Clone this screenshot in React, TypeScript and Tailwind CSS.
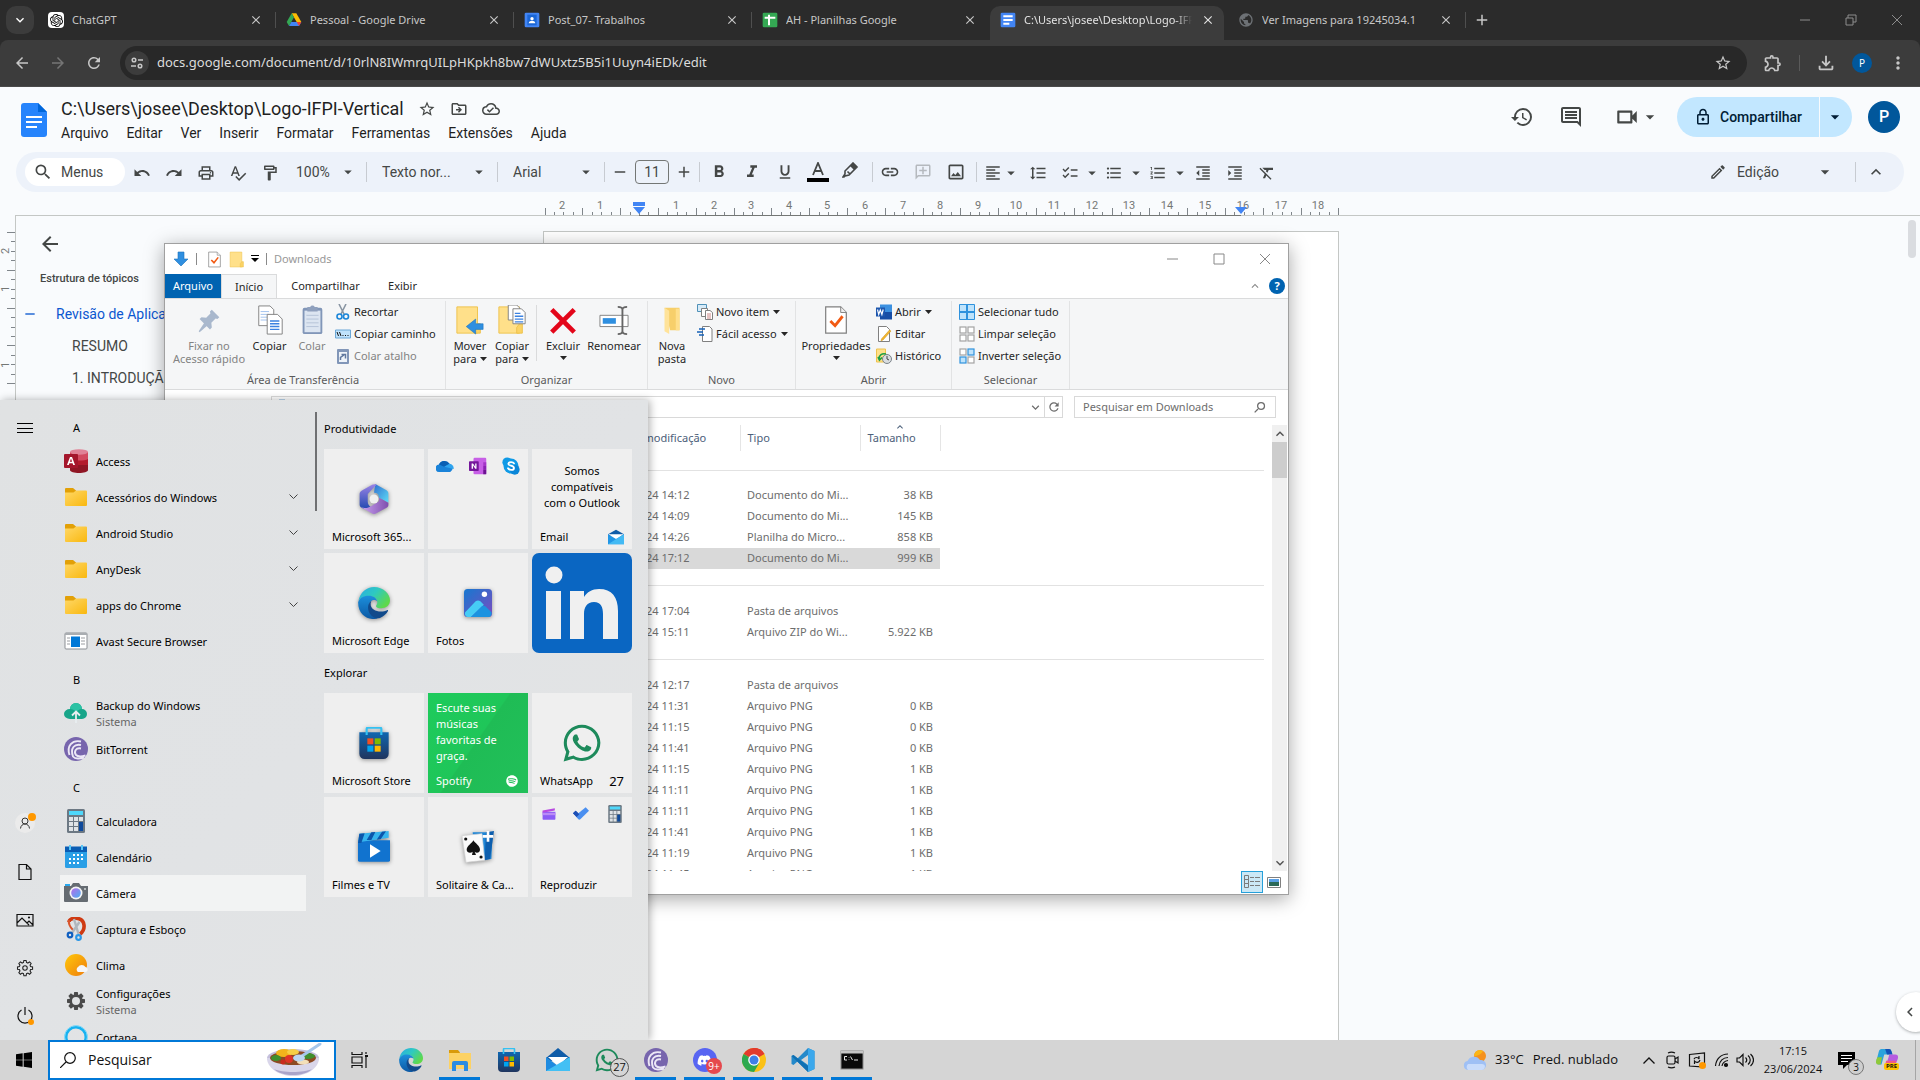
import React from "react";
import {
  MdAdd, MdArrowBack, MdArrowDropDown, MdArrowForward, MdChecklist, MdChevronLeft, MdClose,
  MdFormatAlignLeft, MdFormatBold, MdFormatClear, MdFormatIndentDecrease, MdFormatIndentIncrease,
  MdFormatItalic, MdFormatLineSpacing, MdFormatListBulleted, MdFormatListNumbered, MdFormatUnderlined,
  MdHistory, MdInsertLink, MdKeyboardArrowDown, MdKeyboardArrowUp, MdMoreVert, MdOutlineAddComment,
  MdOutlineCloudDone, MdOutlineDriveFileMove, MdOutlineEdit, MdOutlineExtension, MdOutlineFileDownload,
  MdOutlineFormatPaint, MdOutlineImage, MdOutlineInsertComment, MdOutlineLock, MdOutlinePrint,
  MdOutlineVideocam, MdPublic, MdRedo, MdRefresh, MdRemove, MdSearch, MdSpellcheck, MdStarBorder, MdUndo,
} from "react-icons/md";
import { FaDiscord, FaSpotify, FaWhatsapp } from "react-icons/fa";
import { SiOpenai } from "react-icons/si";

type IconProps = { size?: number; className?: string };
type Drawn = (p: IconProps) => React.ReactElement;

const Svg = ({ size = 24, box = 24, className = "", children }: IconProps & { box?: number; children: React.ReactNode }) => (
  <svg width={size} height={size} viewBox={`0 0 ${box} ${box}`} className={`shrink-0 ${className}`} aria-hidden="true">
    {children}
  </svg>
);

/* ---------- app icons ---------- */

const DriveIcon: Drawn = (p) => (
  <Svg {...p}>
    <path d="M8.500 2h7l7.500 13h-7z" fill="#fbbc04" />
    <path d="M8.500 2 12 8 4.600 21 1 15z" fill="#34a853" />
    <path d="M8 15h15l-3.500 6H4.600z" fill="#4285f4" />
    <path d="M16 15h7l-3.500 6z" fill="#ea4335" />
  </Svg>
);
const ClassroomIcon: Drawn = (p) => (
  <Svg {...p}>
    <rect x="1" y="1" width="22" height="22" rx="2" fill="#4285f4" />
    <rect x="5" y="4" width="14" height="16" fill="#1a66d6" />
    <circle cx="12" cy="10" r="2.500" fill="#fff" />
    <path d="M7 17c0-3 3-4 5-4s5 1 5 4z" fill="#fff" />
  </Svg>
);
const SheetsIcon: Drawn = (p) => (
  <Svg {...p}>
    <rect x="1" y="1" width="22" height="22" rx="2" fill="#34a853" />
    <path d="M4 7h16v3H4zM9 4h3v16H9z" fill="#fff" />
  </Svg>
);
const DocsTabIcon: Drawn = (p) => (
  <Svg {...p}>
    <rect x="1" y="1" width="22" height="22" rx="2" fill="#4285f4" />
    <path d="M5 5h14v3H5zM5 10.500h14v3H5zM5 16h9v3H5z" fill="#fff" />
  </Svg>
);
const GptIcon: Drawn = ({ size = 16 }) => (
  <span className="flex h-4 w-4 items-center justify-center rounded-sm bg-white text-black">
    <SiOpenai size={size - 3} />
  </span>
);
const DocsLogo = () => (
  <svg width="26" height="34" viewBox="0 0 26 34" aria-hidden="true">
    <path d="M3 0h14l9 9v22a3 3 0 0 1-3 3H3a3 3 0 0 1-3-3V3a3 3 0 0 1 3-3z" fill="#2684fc" />
    <path d="M17 0l9 9h-9z" fill="#0066da" />
    <path d="M5 13h16v2H5zM5 18h16v2H5zM5 23h11v2H5z" fill="#fff" />
  </svg>
);
const AccessIcon: Drawn = (p) => (
  <Svg {...p}>
    <path d="M6 3v18c0 4 18 4 18 0V3z" fill="#8f1624" />
    <path d="M6 3v13h18V3z" fill="#b31b2c" />
    <path d="M6 3v7c3 2 15 2 18 0V3z" fill="#d24a5f" />
    <ellipse cx="15" cy="3" rx="9" ry="2.700" fill="#e08296" />
    <rect x="0" y="5" width="14" height="14" rx="1" fill="#a4172c" />
    <path d="M3 16 6 8h2l3 8H9.200l-.6-1.800H5.400L4.800 16zM5.900 12.700h2.200L7 9.600z" fill="#fff" />
  </Svg>
);
const FolderIcon: Drawn = (p) => (
  <Svg {...p}>
    <defs>
      <linearGradient id="folder-front" x1="0" y1="0" x2="1" y2="1">
        <stop offset="0" stopColor="#ffd868" /><stop offset="1" stopColor="#f9b80f" />
      </linearGradient>
    </defs>
    <path d="M1 4a1 1 0 0 1 1-1h7l3 2.500V9H1z" fill="#e2a007" />
    <path d="M1 7.500h8.500L12 5.500h10a1 1 0 0 1 1 1V20a1 1 0 0 1-1 1H2a1 1 0 0 1-1-1z" fill="url(#folder-front)" />
  </Svg>
);
const AvastIcon: Drawn = (p) => (
  <Svg {...p}>
    <rect x="1" y="4" width="22" height="16" rx="1" fill="#fff" stroke="#8b8f94" />
    <path d="M1 4h22v2H1z" fill="#a9adb1" />
    <rect x="7" y="7.500" width="9" height="10.500" fill="#0078d7" />
    <path d="M3 9h3M3 12h3M3 15h3M17 9h4M17 12h4M17 15h4" stroke="#9a9da1" />
  </Svg>
);
const BackupIcon: Drawn = (p) => (
  <Svg {...p}>
    <path d="M6 18a6 5 0 0 1 0-10 6 6 0 0 1 12 0 5 5 0 0 1 0 10z" fill="#17a589" />
    <path d="M12 2a6 6 0 0 1 6 6c-3 0-5 2-6 4C11 9 9 8 6 8a6 6 0 0 1 6-6z" fill="#2bc2a4" />
    <path d="M12 22V11M8 14.500l4-4 4 4" stroke="#e8eef0" strokeWidth="1.800" fill="none" />
  </Svg>
);
const BitTorrentIcon: Drawn = (p) => (
  <Svg {...p}>
    <circle cx="12" cy="12" r="12" fill="#7765ad" />
    <path d="M17 4.500C8 2.500 2.500 9 5.500 18M17 8C10.500 6.500 6 11 9 19.500c2 2.500 7 2.500 11 1M17 11.500c-5-1-7.500 3-5 6.500 2 2 6 1.500 9.500.5" fill="none" stroke="#ece8f6" strokeWidth="1.900" />
  </Svg>
);
const CalcIcon: Drawn = (p) => (
  <Svg {...p}>
    <rect x="3" y="0" width="18" height="24" rx="1.500" fill="#6c7883" />
    <rect x="5" y="2" width="14" height="4" fill="#4fd8fb" />
    <path d="M5 8h4v4H5zM10 8h4v4h-4zM15 8h4v4h-4zM5 13h4v4H5zM10 13h4v4h-4zM5 18h4v4H5zM10 18h4v4h-4z" fill="#dfe3e6" />
    <path d="M15 13h4v9h-4z" fill="#0f4a9c" />
  </Svg>
);
const CalendarIcon: Drawn = (p) => (
  <Svg {...p}>
    <rect x="1" y="2" width="22" height="21" rx="1.500" fill="#2a9fe6" />
    <path d="M1 1.500h22V7H1z" fill="#0a5db4" />
    <path d="M5 0h2v5H5zM17 0h2v5h-2z" fill="#58c7f7" />
    <path d="M9 9h2v2H9zM13 9h2v2h-2zM17 9h2v2h-2zM5 13h2v2H5zM9 13h2v2H9zM13 13h2v2h-2zM17 13h2v2h-2zM5 17h2v2H5zM9 17h2v2H9zM13 17h2v2h-2z" fill="#fff" />
  </Svg>
);
const CameraIcon: Drawn = (p) => (
  <Svg {...p}>
    <defs>
      <linearGradient id="lens" x1="0" y1="0" x2="1" y2="1">
        <stop offset="0" stopColor="#b66be8" /><stop offset="1" stopColor="#4bb1f2" />
      </linearGradient>
    </defs>
    <path d="M1 3h5v3H1z" fill="#2aa8ee" />
    <path d="M0 5h7l2-3h6l2 3h7v15a1 1 0 0 1-1 1H1a1 1 0 0 1-1-1z" fill="#666c72" />
    <circle cx="12" cy="12" r="6.500" fill="#f5f5f5" />
    <circle cx="12" cy="12" r="4.800" fill="url(#lens)" />
    <circle cx="21" cy="8" r="1" fill="#d5d8da" />
  </Svg>
);
const SnipIcon: Drawn = (p) => (
  <Svg {...p}>
    <path d="M5 5C5 0 19-1 20 8c.6 5-2 7.500-4 9" fill="none" stroke="#cf3a12" strokeWidth="3.600" />
    <path d="M5 3c-1 5 2 8 4 10" fill="none" stroke="#d9552c" strokeWidth="2" />
    <path d="M10 2l4.500 15M15.500 5 7.500 16.500" stroke="#b0b6bc" strokeWidth="2.400" />
    <circle cx="6" cy="18" r="2.300" fill="#e3e4e5" stroke="#0f5fc0" strokeWidth="2.200" />
    <circle cx="14.500" cy="20.500" r="2.300" fill="#e3e4e5" stroke="#2a96e6" strokeWidth="2.200" />
  </Svg>
);
const WeatherIcon: Drawn = (p) => (
  <Svg {...p}>
    <defs>
      <linearGradient id="sun" x1="0" y1="0" x2="1" y2="1">
        <stop offset="0" stopColor="#ffc80a" /><stop offset="1" stopColor="#ef7d0d" />
      </linearGradient>
    </defs>
    <circle cx="12" cy="12" r="11" fill="url(#sun)" />
    <path d="M14 19a3 3 0 0 1 0-5 4.500 4.500 0 0 1 7.500 0 2.600 2.600 0 0 1 .5 5z" fill="#f6f6f8" />
  </Svg>
);
const GearPath = "M10.500 3h3l.5 2.600 1.900.8 2.200-1.500 2.100 2.100-1.500 2.200.8 1.900 2.600.5v3l-2.600.5-.8 1.900 1.500 2.200-2.100 2.100-2.200-1.500-1.900.8-.5 2.600h-3l-.5-2.600-1.900-.8-2.200 1.500-2.100-2.100 1.500-2.200-.8-1.900L2 14.600v-3l2.500-.5.8-1.900-1.500-2.200 2.100-2.100 2.200 1.500 1.900-.8z";
const cogTeeth = [0, 45, 90, 135, 180, 225, 270, 315];
const SettingsIcon: Drawn = (p) => (
  <Svg {...p}>
    {cogTeeth.map((a) => <path key={a} d="M10.200 3h3.600l.6 4H9.600z" fill="#4a4a4a" transform={`rotate(${a} 12 12)`} />)}
    <circle cx="12" cy="12" r="5.200" fill="none" stroke="#4a4a4a" strokeWidth="2.400" />
  </Svg>
);
const CortanaIcon: Drawn = (p) => (
  <Svg {...p}>
    <circle cx="12" cy="12" r="10" fill="none" stroke="#18b2f0" strokeWidth="3" />
    <circle cx="12" cy="12" r="11.400" fill="none" stroke="#8bdcf8" strokeWidth="1" />
  </Svg>
);
const EdgeIcon: Drawn = (p) => (
  <Svg {...p}>
    <defs>
      <linearGradient id="edge-top" x1="0" y1="0" x2="1" y2=".6">
        <stop offset="0" stopColor="#2aa9e6" /><stop offset=".5" stopColor="#2ec9c1" /><stop offset="1" stopColor="#5fd94a" />
      </linearGradient>
      <linearGradient id="edge-mid" x1="0" y1="0" x2="0" y2="1">
        <stop offset="0" stopColor="#1c8fdc" /><stop offset="1" stopColor="#0c59a4" />
      </linearGradient>
    </defs>
    <path d="M.3 10.500C1.500 4 6.500 0 12 0c7 0 12 5 12 10 0 4-3 6-6.500 6-2.500 0-4-.8-4-1.600 0-.7 1-1.200 1-3 0-2.500-2.500-4.400-5.500-4.400C5 7 1.500 8.500.3 10.500z" fill="url(#edge-top)" />
    <path d="M.1 11.500C.8 8.500 4 6.500 8 6.500c3.500 0 6 1.800 6.500 4.200-1-1-2.500-1.200-3.700-.8C8 11 7.500 16 10 19.500c1.500 2.500 4 4 5 4C9 25.500 0 22 .1 11.500z" fill="url(#edge-mid)" />
    <path d="M10 10.300c-3.500 2.500-3 8 0 11 2 2 5 2.600 6.500 1.900 3-1.200 5-3.200 6-5.200.2-.5-.2-.8-.7-.6-4 2.200-12.800 1-12.300-5 .1-.9.300-1.500.5-2.100z" fill="#114a8b" />
  </Svg>
);
const M365Icon: Drawn = (p) => (
  <Svg {...p}>
    <defs>
      <linearGradient id="m365a" x1="0" y1="0" x2="1" y2="1">
        <stop offset="0" stopColor="#2f6fd0" /><stop offset="1" stopColor="#5fdcf6" />
      </linearGradient>
      <linearGradient id="m365b" x1="0" y1="0" x2="0" y2="1">
        <stop offset="0" stopColor="#9a83e6" /><stop offset="1" stopColor="#234ab0" />
      </linearGradient>
      <linearGradient id="m365c" x1="0" y1="0" x2="1" y2="0">
        <stop offset="0" stopColor="#c9a0f0" /><stop offset="1" stopColor="#7f4fae" />
      </linearGradient>
    </defs>
    <path d="M13 0 22 5c1 .6 1.500 1.500 1.500 2.600V15l-7.500-4c0-3-2-4-4-4z" fill="url(#m365a)" />
    <path d="M14 .5 7 8v6c0 2 1 3.500 2.500 4.500L4 20l-2.500-1.500C.6 18 .5 17 .5 16V8c0-1 .5-2 1.500-2.600L10.500.6C11.500 0 13 0 14 .5z" fill="url(#m365b)" />
    <path d="M2 18.800C5 19.500 8 19 10 17.500l6-3.700V11l7.500 4v1.600c0 1-.5 1.800-1.500 2.400l-8.500 4.600c-1 .6-2 .6-3 0z" fill="url(#m365c)" />
    <circle cx="12" cy="12" r="3.600" fill="#efefef" />
  </Svg>
);
const OneDriveIcon: Drawn = (p) => (
  <Svg {...p}>
    <path d="M5 20a5 5 0 0 1-1-10 8 8 0 0 1 14-1 6 6 0 0 1 1 11z" fill="#1a83d9" />
    <path d="M4 10a8 8 0 0 1 14-1l-7 4z" fill="#0a5fb4" />
    <path d="M11 13l7-4a6 6 0 0 1 5.500 7z" fill="#2fa4ee" />
  </Svg>
);
const OneNoteIcon: Drawn = (p) => (
  <Svg {...p}>
    <rect x="6" y="1" width="17" height="22" rx="1.500" fill="#c75fe6" />
    <path d="M19 7h4v5h-4z" fill="#a436c8" /><path d="M19 12h4v5h-4z" fill="#8a22b3" /><path d="M19 17h4v6h-4z" fill="#6d1292" />
    <rect x="0" y="5.500" width="13" height="13" rx="1" fill="#75179b" />
    <path d="M3.500 15.500v-7h1.800l3 4.500V8.500H10v7H8.300l-3-4.500v4.500z" fill="#fff" />
  </Svg>
);
const SkypeIcon: Drawn = (p) => (
  <Svg {...p}>
    <circle cx="12" cy="12" r="10" fill="#0f9ae6" /><circle cx="7" cy="7" r="6.500" fill="#0f9ae6" /><circle cx="17" cy="17" r="6.500" fill="#0a86d8" />
    <path d="M16 8.500C15 6.500 9 6 8.500 9c-.4 3 7.500 2 7.500 5.500 0 3.500-6.500 3.500-8 .5" fill="none" stroke="#fff" strokeWidth="2.400" strokeLinecap="round" />
  </Svg>
);
const MailOpenIcon: Drawn = (p) => (
  <Svg {...p}>
    <path d="M0 8 12 1l12 7v3H0z" fill="#0f5ca8" />
    <path d="M0 8h24L12 15z" fill="#fff" />
    <path d="M0 8l12 7 12-7v15H0z" fill="#2196e6" />
    <path d="M0 23 24 8v15z" fill="#4cc3f7" opacity=".8" />
  </Svg>
);
const PhotosIcon: Drawn = (p) => (
  <Svg {...p}>
    <defs>
      <linearGradient id="photo-bg" x1="0" y1="0" x2="1" y2="1">
        <stop offset="0" stopColor="#1678d0" /><stop offset="1" stopColor="#7b4cc0" />
      </linearGradient>
    </defs>
    <rect x="0" y="0" width="24" height="24" rx="3" fill="url(#photo-bg)" />
    <path d="M1 20 10 10.500c1-1 3-1 4 0l3 3L6 24H3a3 3 0 0 1-2-4z" fill="#46cdf5" />
    <path d="M6 24l9-9c1-1 2.500-1 3.500 0l5 5a3 3 0 0 1-2.500 4z" fill="#1c93e0" />
    <circle cx="17.500" cy="4.500" r="2.300" fill="#fff" />
  </Svg>
);
const StoreIcon: Drawn = (p) => (
  <Svg {...p}>
    <defs>
      <linearGradient id="bag" x1="0" y1="0" x2="0" y2="1">
        <stop offset="0" stopColor="#0f66b0" /><stop offset="1" stopColor="#20355e" />
      </linearGradient>
    </defs>
    <path d="M1 4h22v16a4 4 0 0 1-4 4H5a4 4 0 0 1-4-4z" fill="url(#bag)" />
    <path d="M6.500 6V1.500a1 1 0 0 1 1-1h9a1 1 0 0 1 1 1V6" fill="none" stroke="#34c1f2" strokeWidth="1.600" />
    <path d="M7 8.500h4.500V13H7z" fill="#f25022" /><path d="M12.500 8.500H17V13h-4.500z" fill="#7fba00" />
    <path d="M7 14h4.500v4.500H7z" fill="#00a4ef" /><path d="M12.500 14H17v4.500h-4.500z" fill="#ffb900" />
  </Svg>
);
const FilmsIcon: Drawn = (p) => (
  <Svg {...p}>
    <path d="M0 7h24v15a1 1 0 0 1-1 1H1a1 1 0 0 1-1-1z" fill="#1173cf" />
    <path d="M1 2 23 0v5L3 8 0 9z" fill="#36b4ee" />
    <path d="M1 2l4-.4L2.500 9H0zM10 1l3-.2-3 6H6.500zM18 .5l3-.3-4 6-3 .4z" fill="#0c56ab" />
    <path d="M9 10l8 5-8 5z" fill="#fff" />
  </Svg>
);
const SolitaireIcon: Drawn = (p) => (
  <Svg {...p}>
    <path d="M8 1l15 0-1 20-12 1z" fill="#1f86d6" />
    <path d="M18 1l6-1-3 21-4 1z" fill="#0e5fae" />
    <path d="M0 3.500 15 2l2 20-14 1.500z" fill="#fafafa" stroke="#d4d4d4" strokeWidth=".5" />
    <path d="M19.500 0v8M15.500 4h8" stroke="#fff" strokeWidth="2" />
    <path d="M8.500 7c1.500 2.500 5 4 5 7 0 2-2.500 3-4 1.500L10.500 18h-3l.5-2.500c-1.500 1.500-4.500.8-4.500-1.500 0-3 4-4.500 5-7z" fill="#111" />
    <circle cx="2.800" cy="6" r="1.200" fill="#111" /><circle cx="14.300" cy="19.500" r="1.200" fill="#111" />
  </Svg>
);
const ClipIcon: Drawn = (p) => (
  <Svg {...p}>
    <path d="M1 8h22v12a2 2 0 0 1-2 2H3a2 2 0 0 1-2-2z" fill="#8b5cf6" />
    <path d="M1 6 22 2v4L1 10z" fill="#b84ae0" /><path d="M1 10h22v4H1z" fill="#b98bf7" />
  </Svg>
);
const TodoIcon: Drawn = (p) => (
  <Svg {...p}>
    <path d="M0 11l4-4 7 7-4 4z" fill="#1d4fb5" />
    <path d="M3.500 14.500 19 2l5 5-13 13c-1 1-2 1-3 0z" fill="#4a8ff0" />
    <path d="M0 11l4-4 5.500 5.500-4 4z" fill="#1d4fb5" />
  </Svg>
);
const MailIcon: Drawn = (p) => (
  <Svg {...p}>
    <path d="M0 10 12 0l12 10v3H0z" fill="#0f5ca8" />
    <path d="M2 9h20l-10 9z" fill="#fff" />
    <path d="M0 9l12 9L24 9v14H0z" fill="#1f8be0" />
    <path d="M0 23 24 9v14z" fill="#43c0f4" />
  </Svg>
);
const ExplorerIcon: Drawn = (p) => (
  <Svg {...p}>
    <path d="M1 2h9l2 2.500v4H1z" fill="#d99a0a" />
    <path d="M1 5h22v16H1z" fill="#fdd264" />
    <path d="M4 23v-8a2 2 0 0 1 2-2h12a2 2 0 0 1 2 2v8h-4v-6H8v6z" fill="#2b8ce0" />
    <path d="M8 17h8v4H8z" fill="#fdd264" />
  </Svg>
);
const ChromeIcon: Drawn = (p) => (
  <Svg {...p}>
    <circle cx="12" cy="12" r="12" fill="#fbc116" />
    <path d="M12 12 1.600 6A12 12 0 0 1 22.400 6z" fill="#e33b2e" />
    <path d="M12 12 1.600 6A12 12 0 0 0 12 24l5.200-9z" fill="#2da94f" />
    <path d="M12 0a12 12 0 0 1 10.400 6H12z" fill="#e33b2e" />
    <circle cx="12" cy="12" r="5.800" fill="#fff" /><circle cx="12" cy="12" r="4.500" fill="#3f7fe8" />
  </Svg>
);
const CodeIcon: Drawn = (p) => (
  <Svg {...p}>
    <path d="M17 0 6.500 10.500 2.500 7 .5 8v8l2 1 4-3.500L17 24l6.500-3V3zM17 7v10l-7-5z" fill="#2489ca" />
    <path d="M17 0l6.500 3v18L17 24z" fill="#3ba8ec" />
    <path d="M2.500 7 17 18v6L.5 8z" fill="#1070b3" />
  </Svg>
);
const CmdIcon: Drawn = (p) => (
  <Svg {...p}>
    <rect x="1" y="3" width="22" height="18" fill="#0a0a0a" stroke="#8a8a8a" />
    <path d="M1 3h22v2.500H1z" fill="#c5c5c5" />
    <path d="M7 8.500H4.500V12H7M9 9v.5M9 11.500v.5M10.500 8.500l2 3.500M14 12h4" stroke="#e5e5e5" fill="none" />
  </Svg>
);
const WindowsIcon: Drawn = (p) => (
  <Svg {...p}>
    <path d="M0 3.500 10 2v9.500H0zM11.500 1.800 24 0v11.500H11.500zM0 12.500h10V22L0 20.500zM11.500 12.500H24V24l-12.500-1.800z" fill="#000" />
  </Svg>
);
const CloudSunIcon: Drawn = (p) => (
  <Svg {...p}>
    <circle cx="17" cy="8" r="6" fill="#f5911e" /><path d="M17 2a6 6 0 0 0-6 6c3 0 8-2 9-5z" fill="#fbb616" />
    <path d="M5 22a4.500 4.500 0 0 1-.5-8.900A7 7 0 0 1 17 12a5 5 0 0 1 2 10z" fill="#9fc0f5" />
    <path d="M5 22a4.500 4.500 0 0 1 0-6h14c3 0 4 3 1.500 5.500L19 22z" fill="#c9dcfb" />
  </Svg>
);
const CopilotIcon: Drawn = (p) => (
  <Svg {...p}>
    <path d="M6 1h8c2 0 2.500 1.500 3 3l1 3H9L6 18H4c-4 0-4-3-3-6l2-8c.5-2 1.500-3 3-3z" fill="#2aa3dc" />
    <path d="M1.500 10h5L5 18H3c-4 0-3.500-4-1.500-8z" fill="#8fc93a" />
    <path d="M10 1h4c2 0 2.500 1.500 3 3l1 3h-6z" fill="#1453b8" />
    <path d="M15 7h6c3 0 3.500 2.500 2.700 5l-2 5c-.7 2-1.700 2-3 2h-8l3-9c.4-1.500.6-3 1.300-3z" fill="#b65be0" />
    <path d="M11 14h11l-1 3c-.7 2-1.700 2-3 2h-8z" fill="#ef5a8a" />
  </Svg>
);
const Bowl = () => (
  <svg width="56" height="34" viewBox="0 0 56 34" aria-hidden="true">
    <ellipse cx="27" cy="15" rx="26" ry="9" fill="#c4bfdc" />
    <path d="M1 15c0 10 12 18 26 18s26-8 26-18z" fill="#d9d6ea" />
    <path d="M8 26c8 8 30 8 38 0-8 4-30 4-38 0z" fill="#aaa4c9" />
    <ellipse cx="27" cy="15" rx="23" ry="7" fill="#8c4a24" />
    <ellipse cx="18" cy="10" rx="8" ry="4" fill="#f2b41b" /><ellipse cx="27" cy="9" rx="6" ry="3" fill="#f7cf46" />
    <ellipse cx="10" cy="15" rx="5" ry="3" fill="#3f8f2e" /><ellipse cx="42" cy="13" rx="7" ry="3" fill="#3f8f2e" />
    <circle cx="23" cy="16" r="4" fill="#df3327" /><circle cx="17" cy="19" r="2.500" fill="#c92a20" />
    <ellipse cx="37" cy="19" rx="6" ry="2.500" fill="#f3dfb8" />
    <path d="M54 1 36 13" stroke="#a5c6ea" strokeWidth="3" strokeLinecap="round" /><ellipse cx="33" cy="15" rx="6" ry="3.500" fill="#bcd6f1" />
  </svg>
);
const ThinDown = ({ className = "" }: { className?: string }) => (
  <svg width="9" height="6" viewBox="0 0 9 6" className={className} aria-hidden="true"><path d="M.5.5l4 4 4-4" fill="none" stroke="currentColor" /></svg>
);

/* ---------- explorer icons ---------- */

const DownArrow: Drawn = (p) => (
  <Svg {...p} box={16}><path d="M5 1h6v7h4l-7 7-7-7h4z" fill="#2f8fe0" stroke="#1b74be" strokeWidth=".6" /></Svg>
);
const CheckDoc: Drawn = (p) => (
  <Svg {...p} box={32}>
    <path d="M5 2h16l6 6v22H5z" fill="#fff" stroke="#808080" strokeWidth="1.300" /><path d="M21 2v6h6" fill="#eee" stroke="#808080" />
    <path d="M10 17l5 5 8-10" fill="none" stroke="#f25a13" strokeWidth="3" />
  </Svg>
);
const PlainFolder: Drawn = (p) => (
  <Svg {...p} box={32}>
    <path d="M4 2h22v28H4z" fill="#ffe08a" stroke="#eec24c" /><path d="M26 20h3v10h-6v-6z" fill="#fbd365" stroke="#eec24c" />
  </Svg>
);
const MoveFolder: Drawn = (p) => (
  <Svg {...p} box={32}>
    <path d="M2 2h22v28H2z" fill="#ffe08a" stroke="#eec24c" /><path d="M24 20h3v10h-6v-6z" fill="#fbd365" stroke="#eec24c" />
    <path d="M30 20h-8v-5l-10 8 10 8v-5h8z" fill="#2f8fe0" stroke="#1b74be" strokeWidth=".6" />
  </Svg>
);
const CopyFolder: Drawn = (p) => (
  <Svg {...p} box={32}>
    <path d="M2 2h22v28H2z" fill="#ffe08a" stroke="#eec24c" /><path d="M24 20h3v10h-6v-6z" fill="#fbd365" stroke="#eec24c" />
    <path d="M12 0h9l3 3v13H12z" fill="#fff" stroke="#808080" /><path d="M17 4h9l4 4v12H17z" fill="#fff" stroke="#808080" />
    <path d="M19 9h6M19 12h9M19 15h9M19 18h9" stroke="#3c82e0" strokeWidth="1.400" />
  </Svg>
);
const CopyDocs: Drawn = (p) => (
  <Svg {...p} box={32}>
    <path d="M4 1h12l4 4v17H4z" fill="#fff" stroke="#808080" /><path d="M6 7h9M6 10h9M6 13h9M6 16h9" stroke="#9ec0ee" />
    <path d="M13 10h11l5 5v16H13z" fill="#fff" stroke="#808080" /><path d="M16 17h10M16 20h10M16 23h10M16 26h10" stroke="#3c82e0" strokeWidth="1.500" />
  </Svg>
);
const PinIcon: Drawn = (p) => (
  <Svg {...p} box={32}>
    <path d="M19 5l8 8-2 2-2-.5-4.500 4.500.5 5-2 2-11-11 2-2 5 .5L17.500 9 17 7z" fill="#a9b8cd" /><path d="M11 19l3 3-8 7-1-1z" fill="#a9b8cd" />
  </Svg>
);
const Clipboard: Drawn = (p) => (
  <Svg {...p} box={32}>
    <rect x="6" y="3" width="21" height="28" rx="2" fill="#8196b8" /><rect x="8" y="6" width="17" height="23" fill="#dce5f1" />
    <path d="M11 2h3a3 3 0 0 1 5 0h3v5H11z" fill="#8fa0bd" /><path d="M10 11h13M10 15h13M10 19h13M10 23h13" stroke="#b4c2d8" />
  </Svg>
);
const DeleteX: Drawn = (p) => (
  <Svg {...p} box={32}><path d="M4 5l24 24M28 5 4 29" stroke="#e3061a" strokeWidth="5" /></Svg>
);
const RenameIcon: Drawn = (p) => (
  <Svg {...p} box={32}>
    <path d="M1 11h30v12H1z" fill="#fff" stroke="#808080" /><path d="M4 14h14v6H4z" fill="#2f8fe0" />
    <path d="M20 2c3 0 5 1 5 3v23c0 2-2 3-5 3M30 2c-3 0-5 1-5 3v23c0 2 2 3 5 3" fill="none" stroke="#666" strokeWidth="2" />
  </Svg>
);
const NewFolder: Drawn = (p) => (
  <Svg {...p} box={32}>
    <path d="M8 3h16v24H14z" fill="#f7cf6a" /><path d="M8 3l5 3v25l-5-3z" fill="#ffe39a" /><path d="M20 4h4v23h-4z" fill="#ffdf8b" />
  </Svg>
);
const Scissors: Drawn = (p) => (
  <Svg {...p} box={16}>
    <path d="M4 0l5 10M11 0 6 10" stroke="#8a96a3" strokeWidth="1.600" />
    <circle cx="4.500" cy="12.500" r="2.500" fill="none" stroke="#1c86d8" strokeWidth="1.600" /><circle cx="11" cy="12.500" r="2.500" fill="none" stroke="#1c86d8" strokeWidth="1.600" />
  </Svg>
);
const PathIcon: Drawn = (p) => (
  <Svg {...p} box={16}><path d="M.5 4h15v8H.5z" fill="#bfe2fb" stroke="#6ba7d6" /><path d="M2 6l1.500 4M4.500 6 6 10M7.500 9.500h1M10 9.500h1M12.500 9.500h1" stroke="#111" /></Svg>
);
const ShortcutIcon: Drawn = (p) => (
  <Svg {...p} box={16}><rect x="2" y="1" width="12" height="15" rx="1" fill="#8196b8" /><path d="M4 4h8v10H4z" fill="#eef3f9" /><path d="M5.500 12V9.500L9 7M6.500 6.500h4v4" fill="none" stroke="#60789f" strokeWidth="1.500" /></Svg>
);
const NewItemIcon: Drawn = (p) => (
  <Svg {...p} box={16}>
    <path d="M.5.5h9v7h-9z" fill="#d7ebf8" stroke="#4f91b8" /><path d="M4.500 4.500h6v8h-6z" fill="#fff" stroke="#808080" /><path d="M8.500 6.500H13l2.500 2v7h-7z" fill="#fff" stroke="#808080" /><path d="M10 10h4M10 12h4M10 14h4" stroke="#c88" />
  </Svg>
);
const EasyIcon: Drawn = (p) => (
  <Svg {...p} box={16}><path d="M5.500.5h7l2.500 2.500v12.500H5.500z" fill="#fff" stroke="#808080" /><path d="M2 3h6M0 6h6M2 9h5" stroke="#1662b8" strokeWidth="1.500" /></Svg>
);
const WordIcon: Drawn = (p) => (
  <Svg {...p} box={16}>
    <path d="M4 .500h12V8H4z" fill="#3b90e0" /><path d="M4 8h12v7.500H4z" fill="#174ea6" /><rect x="0" y="3.500" width="9" height="9" fill="#1d56ae" />
    <path d="M1.500 5.500l1.200 5 1.600-4.500 1.600 4.500 1.300-5" fill="none" stroke="#fff" strokeWidth="1.200" />
  </Svg>
);
const EditDocIcon: Drawn = (p) => (
  <Svg {...p} box={16}><path d="M2.500.5h8l3 3v12h-11z" fill="#fff" stroke="#808080" /><path d="M15 5 7 14l-2 .8.600-2L13.500 4z" fill="#f5b82e" stroke="#c78a12" strokeWidth=".5" /></Svg>
);
const HistoryIcon: Drawn = (p) => (
  <Svg {...p} box={16}><path d="M.5 1h9v13h-9z" fill="#ffe08a" stroke="#eec24c" /><circle cx="11" cy="11" r="4.500" fill="#d9dde0" stroke="#7b8389" /><path d="M11 8v3l2 1" fill="none" stroke="#444" /><path d="M3 11c0-4 3-6 7-5M2 9l1.500 3L6 9.500" fill="none" stroke="#1da043" strokeWidth="1.700" /></Svg>
);
const squares = (fills: boolean[]) => (
  <>
    {fills.map((f, i) => (
      <rect key={i} x={(i % 2) * 8 + 1} y={Math.floor(i / 2) * 8 + 1} width="6" height="6" fill={f ? "#bfe3fb" : "#fff"} stroke={f ? "#2f92dd" : "#a3a3a3"} strokeWidth="1.200" />
    ))}
  </>
);
const SelAll: Drawn = (p) => <Svg {...p} box={16}><path d="M.5.5h15v15H.5z" fill="#bfe3fb" stroke="#2f92dd" /><path d="M8 0v16M0 8h16" stroke="#2f92dd" strokeWidth="2" /></Svg>;
const SelNone: Drawn = (p) => <Svg {...p} box={16}>{squares([false, false, false, false])}</Svg>;
const SelInv: Drawn = (p) => <Svg {...p} box={16}>{squares([false, true, true, false])}</Svg>;

/* ---------- browser ---------- */

const tabs: { title: string; icon: React.ReactNode; active?: boolean }[] = [
  { title: "ChatGPT", icon: <GptIcon size={16} /> },
  { title: "Pessoal - Google Drive", icon: <DriveIcon size={16} /> },
  { title: "Post_07- Trabalhos", icon: <ClassroomIcon size={16} /> },
  { title: "AH - Planilhas Google", icon: <SheetsIcon size={16} /> },
  { title: "C:\\Users\\josee\\Desktop\\Logo-IFPI-Vertical", icon: <DocsTabIcon size={16} />, active: true },
  { title: "Ver Imagens para 19245034.1", icon: <MdPublic size={16} className="text-[#6d7175]" /> },
];

const TabStrip = () => (
  <div className="flex h-10 items-center bg-[#2b2b2b] pl-[6px] text-[#c7c7c7]">
    <button aria-label="Pesquisar guias" className="mr-1 flex h-7 w-7 items-center justify-center rounded-[10px] bg-[#3c3c3c] text-white">
      <MdKeyboardArrowDown size={16} />
    </button>
    {tabs.map((t, i) => (
      <div key={t.title} className={`flex h-10 w-[238px] items-center ${t.active || tabs[i + 1]?.active ? "" : "relative after:absolute after:right-0 after:h-4 after:w-px after:bg-[#4f4f4f]"}`}>
        <div className={`flex items-center pl-[10px] ${t.active ? "mt-[6px] h-[34px] w-[234px] rounded-t-[10px] bg-[#3c3c3c] pb-[6px] text-[#e3e3e3]" : "h-10 w-full"}`}>
          {t.icon}
          <button className="ml-2 w-[170px] overflow-hidden text-left text-[11px] whitespace-nowrap">
            {t.active ? <span className="block w-[168px] overflow-hidden mask-r-from-90%">{t.title}</span> : t.title}
          </button>
          <button aria-label="Fechar guia" className="ml-[6px] flex h-4 w-4 items-center justify-center"><MdClose size={14} /></button>
        </div>
      </div>
    ))}
    <button aria-label="Nova guia" className="ml-[6px] flex h-5 w-5 items-center justify-center"><MdAdd size={18} /></button>
    <div className="ml-auto flex text-[#8d8d8d]">
      {["M1 6h10", "M1 4h7v7H1zM3 4V1h8v7H8", "M1 1l10 10M11 1 1 11"].map((d, i) => (
        <button key={d} aria-label={["Minimizar", "Restaurar", "Fechar"][i]} className="flex h-10 w-[46px] items-center justify-center">
          <svg width="12" height="12" viewBox="0 0 12 12"><path d={d} fill="none" stroke="currentColor" /></svg>
        </button>
      ))}
    </div>
  </div>
);

const AddressBar = () => (
  <div className="bg-[#2b2b2b]">
    <div className="flex h-[47px] items-center rounded-t-[8px] border-b border-[#4a4a4a] bg-[#3c3c3c] px-1 text-[#c7c7c7]">
      <button aria-label="Voltar" className="flex h-9 w-9 items-center justify-center"><MdArrowBack size={18} /></button>
      <button aria-label="Avançar" className="flex h-9 w-9 items-center justify-center text-[#757575]"><MdArrowForward size={18} /></button>
      <button aria-label="Recarregar" className="flex h-9 w-9 items-center justify-center"><MdRefresh size={18} /></button>
      <div className="ml-2 flex h-[34px] flex-1 items-center rounded-full bg-[#282828] pr-[15px] pl-[5px]">
        <button aria-label="Informações do site" className="flex h-6 w-6 items-center justify-center rounded-full bg-[#3c3c3c]">
          <svg width="14" height="14" viewBox="0 0 14 14" fill="none" stroke="currentColor" strokeWidth="1.500"><circle cx="4" cy="4" r="1.800" /><path d="M8 4h5M1 10h5" /><circle cx="10" cy="10" r="1.800" /></svg>
        </button>
        <input aria-label="Endereço" className="ml-2 min-w-0 flex-1 bg-transparent text-[13px] text-[#dcdcdc] outline-none" defaultValue="docs.google.com/document/d/10rlN8IWmrqUILpHKpkh8bw7dWUxtz5B5i1Uuyn4iEDk/edit" />
        <button aria-label="Favoritar"><MdStarBorder size={18} /></button>
      </div>
      <button aria-label="Extensões" className="ml-2 flex w-9 justify-center"><MdOutlineExtension size={20} /></button>
      <span className="ml-2 h-4 w-px bg-[#5a5a5a]" />
      <button aria-label="Downloads" className="ml-2 flex w-9 justify-center"><MdOutlineFileDownload size={22} /></button>
      <button aria-label="Perfil" className="mx-2 flex h-5 w-5 items-center justify-center rounded-full bg-[#01579b] text-[10px] text-white">P</button>
      <button aria-label="Menu" className="flex w-9 justify-center"><MdMoreVert size={20} /></button>
    </div>
  </div>
);

const DocsHeader = () => (
  <header className="flex h-16 items-start pt-[10px] pr-5 pl-[21px] text-[#444746]">
    <div className="pt-[6px]"><DocsLogo /></div>
    <div className="ml-[14px]">
      <div className="flex h-6 items-center">
        <h1 className="text-[18px] leading-6 text-[#1f1f1f]">C:\Users\josee\Desktop\Logo-IFPI-Vertical</h1>
        <div className="ml-[14px] flex gap-[14px]">
          <button aria-label="Estrela"><MdStarBorder size={18} /></button>
          <button aria-label="Mover"><MdOutlineDriveFileMove size={18} /></button>
          <button aria-label="Status"><MdOutlineCloudDone size={18} /></button>
        </div>
      </div>
      <nav className="mt-[2px] flex gap-[18px] text-sm leading-5 text-[#1f1f1f]">
        {["Arquivo", "Editar", "Ver", "Inserir", "Formatar", "Ferramentas", "Extensões", "Ajuda"].map((m) => <button key={m}>{m}</button>)}
      </nav>
    </div>
    <div className="ml-auto flex h-10 items-center">
      <button aria-label="Histórico" className="mr-[25px]"><MdHistory size={24} /></button>
      <button aria-label="Comentários" className="mr-[31px]"><MdOutlineInsertComment size={24} /></button>
      <button aria-label="Reunião" className="mr-[17px] flex items-center"><MdOutlineVideocam size={26} /><MdArrowDropDown size={20} /></button>
      <button className="flex h-10 w-[142px] items-center rounded-l-full bg-[#c2e7ff] pl-[17px] text-sm font-medium text-[#001d35]">
        <MdOutlineLock size={18} className="mr-2" />Compartilhar
      </button>
      <button aria-label="Opções de compartilhamento" className="ml-px flex h-10 w-8 items-center rounded-r-full bg-[#c2e7ff] pl-[5px] text-[#001d35]"><MdArrowDropDown size={20} /></button>
      <button aria-label="Conta" className="ml-4 flex h-8 w-8 items-center justify-center rounded-full bg-[#01579b] text-base font-medium text-white">P</button>
    </div>
  </header>
);

const Sep = () => <span className="h-5 w-px bg-[#c7cbd1]" />;
const ToolButton = ({ label, width = "w-8", children }: { label: string; width?: string; children: React.ReactNode }) => (
  <button aria-label={label} className={`flex h-7 shrink-0 items-center justify-center ${width}`}>{children}</button>
);
const ToolSelect = ({ label, value, width }: { label: string; value: string; width: string }) => (
  <label className={`relative flex items-center ${width}`}>
    <select aria-label={label} className="w-full appearance-none bg-transparent pl-[10px] text-sm outline-none"><option>{value}</option></select>
    <MdArrowDropDown size={18} className="pointer-events-none absolute right-[9px]" />
  </label>
);

const DocsToolbar = () => (
  <div className="mx-4 mt-[1px] flex h-10 items-center rounded-full bg-[#edf2fa] pl-[9px] text-[#444746]">
    <button className="mr-px flex h-7 w-[100px] items-center gap-2 rounded-full bg-white pl-2 text-sm"><MdSearch size={20} />Menus</button>
    <div className="flex pt-[2px]">
      <ToolButton label="Desfazer"><MdUndo size={18} /></ToolButton>
      <ToolButton label="Refazer"><MdRedo size={18} /></ToolButton>
      <ToolButton label="Imprimir"><MdOutlinePrint size={18} /></ToolButton>
      <ToolButton label="Ortografia"><MdSpellcheck size={18} /></ToolButton>
      <ToolButton label="Pintar formatação"><MdOutlineFormatPaint size={18} /></ToolButton>
    </div>
    <ToolSelect label="Zoom" value="100%" width="w-[80px]" /><Sep />
    <ToolSelect label="Estilo" value="Texto nor..." width="ml-[5px] w-[125px]" /><Sep />
    <ToolSelect label="Fonte" value="Arial" width="ml-[5px] w-[101px]" /><Sep />
    <ToolButton label="Diminuir" width="w-[30px]"><MdRemove size={18} /></ToolButton>
    <input aria-label="Tamanho da fonte" defaultValue="11" className="h-6 w-[34px] rounded border border-[#747775] bg-transparent text-center text-sm outline-none" />
    <ToolButton label="Aumentar" width="w-[30px]"><MdAdd size={18} /></ToolButton><Sep />
    <div className="ml-[2px] flex">
      <ToolButton label="Negrito" width="w-[33px]"><MdFormatBold size={20} /></ToolButton>
      <ToolButton label="Itálico" width="w-[33px]"><MdFormatItalic size={20} /></ToolButton>
      <ToolButton label="Sublinhado" width="w-[33px]"><MdFormatUnderlined size={18} /></ToolButton>
      <ToolButton label="Cor do texto" width="w-[33px]">
        <svg width="22" height="20" viewBox="0 0 22 20"><path d="M6 13 11 1l5 12M7.800 9h6.400" fill="none" stroke="#444746" strokeWidth="1.800" /><path d="M0 16h22v4H0z" fill="#000" /></svg>
      </ToolButton>
      <ToolButton label="Cor de destaque" width="w-[33px]">
        <svg width="18" height="20" viewBox="0 0 18 20"><path d="M3 9 11 1l4 4-8 8-4 1-1 1H1l2-3zM5.500 9.500 8 12" fill="none" stroke="#444746" strokeWidth="1.600" /><path d="M8 4l4 4 3-3-4-4z" fill="#444746" /></svg>
      </ToolButton>
    </div>
    <span className="ml-[5px]" /><Sep />
    <ToolButton label="Link" width="w-[33px]"><MdInsertLink size={20} /></ToolButton>
    <ToolButton label="Comentário" width="w-[33px]"><MdOutlineAddComment size={18} className="-scale-x-100 text-[#b5b9be]" /></ToolButton>
    <ToolButton label="Imagem" width="w-[33px]"><MdOutlineImage size={20} /></ToolButton>
    <span className="ml-1" /><Sep />
    <div className="flex pt-px">
      <ToolButton label="Alinhar" width="ml-[5px] w-[40px]"><MdFormatAlignLeft size={18} /><MdArrowDropDown size={18} /></ToolButton>
      <ToolButton label="Espaçamento"><MdFormatLineSpacing size={18} /></ToolButton>
      <ToolButton label="Checklist" width="ml-[5px] w-[44px] gap-1"><MdChecklist size={18} /><MdArrowDropDown size={18} /></ToolButton>
      <ToolButton label="Marcadores" width="w-[44px] gap-1"><MdFormatListBulleted size={18} /><MdArrowDropDown size={18} /></ToolButton>
      <ToolButton label="Numerada" width="w-[44px] gap-1"><MdFormatListNumbered size={18} /><MdArrowDropDown size={18} /></ToolButton>
      <div className="flex gap-2">
        <ToolButton label="Diminuir recuo" width="w-6"><MdFormatIndentDecrease size={18} /></ToolButton>
        <ToolButton label="Aumentar recuo" width="w-6"><MdFormatIndentIncrease size={18} /></ToolButton>
        <ToolButton label="Limpar formatação" width="w-6"><MdFormatClear size={18} /></ToolButton>
      </div>
    </div>
    <button className="ml-auto flex h-7 w-[126px] items-center text-sm"><MdOutlineEdit size={18} className="mr-[10px]" />Edição<MdArrowDropDown size={20} className="ml-auto" /></button>
    <span className="ml-5" /><Sep />
    <ToolButton label="Ocultar menus" width="ml-1 w-8"><MdKeyboardArrowUp size={20} /></ToolButton>
    <span className="w-3" />
  </div>
);

const CM = 37.8;
const HRuler = () => (
  <svg className="block h-6 w-full shrink-0" aria-hidden="true">
    {Array.from({ length: 85 }, (_, i) => i - 10).map((q) => {
      const x = Math.round(639 + (q * CM) / 4);
      const tall = Math.abs(q % 4) === 2;
      return <path key={q} d={`M${x + 0.5} ${tall ? 16 : 20}V23`} stroke="#80868b" />;
    })}
    {Array.from({ length: 21 }, (_, i) => i - 2).filter((n) => n !== 0).map((n) => (
      <text key={n} x={Math.round(638 + n * CM)} y="17" textAnchor="middle" fontSize="11" fill="#747775">{Math.abs(n)}</text>
    ))}
    <path d="M15 23.500H3000" stroke="#c4c7c5" /><path d="M639 23.500h602" stroke="#747775" />
    <path d="M633 10h12v4h-12zM633 15h12l-6 7zM1235 15h12l-6 7z" fill="#4285f4" />
  </svg>
);
const VRuler = () => (
  <svg className="block h-[184px] w-[15px] shrink-0" aria-hidden="true">
    {Array.from({ length: 17 }, (_, i) => i).map((i) => {
      const y = Math.round(16 + i * 9.45);
      return <path key={i} d={`M${i % 4 === 0 ? 7 : 11} ${y + 0.5}H15`} stroke="#80868b" />;
    })}
    {[[2, 35], [1, 73], [1, 149]].map(([n, y]) => (
      <text key={y} transform={`translate(9 ${y}) rotate(-90)`} textAnchor="middle" fontSize="11" fill="#747775">{n}</text>
    ))}
  </svg>
);

const Browser = () => (
  <section className="flex min-h-0 flex-1 flex-col bg-[#f9fbfd]">
    <div className="font-['Noto_Sans',sans-serif]"><TabStrip /><AddressBar /></div>
    <div className="flex min-h-0 flex-1 flex-col font-[Roboto,sans-serif]">
      <DocsHeader />
      <DocsToolbar />
      <HRuler />
      <div className="flex min-h-0 flex-1">
        <VRuler />
        <aside className="flex w-[528px] shrink-0 flex-col items-start border-l border-[#c4c7c5] pt-4 text-[#444746]">
          <button aria-label="Fechar estrutura" className="ml-[22px]"><MdArrowBack size={24} /></button>
          <h2 className="mt-[13px] ml-6 text-[11px] leading-5 font-medium">Estrutura de tópicos</h2>
          <div className="mt-[15px] ml-[6px] flex items-center text-[#0b57d0]"><MdRemove size={16} /><button className="ml-[18px] text-sm leading-5">Revisão de Aplicações</button></div>
          <button className="mt-3 ml-14 text-sm leading-5">RESUMO</button>
          <button className="mt-3 ml-14 text-sm leading-5">1. INTRODUÇÃO</button>
        </aside>
        <div className="mt-[15px] w-[796px] shrink-0 border border-b-0 border-[#c4c7c5] bg-white" />
        <div className="ml-auto w-4 pt-1"><div className="mx-auto h-[38px] w-2 rounded-full bg-[#dadce0]" /></div>
      </div>
    </div>
  </section>
);

/* ---------- file explorer ---------- */

const Caret = ({ className = "" }: { className?: string }) => (
  <svg width="7" height="4" viewBox="0 0 7 4" className={`inline-block shrink-0 ${className}`} aria-hidden="true"><path d="M0 0h7L3.500 4z" fill="currentColor" /></svg>
);
const Big = ({ icon: I, lines, width, muted, caret }: { icon: Drawn; lines: string[]; width: string; muted?: boolean; caret?: boolean }) => (
  <button className={`flex shrink-0 flex-col items-center pt-1 leading-[13px] ${width} ${muted ? "text-[#838383]" : "text-[#262626]"}`}>
    <I size={30} className="mb-[4px]" />
    {lines.map((l, i) => <span key={l} className="flex items-center whitespace-nowrap">{l}{caret && i === 1 && <Caret className="ml-[3px]" />}</span>)}
    {caret && lines.length === 1 && <Caret className="mt-1" />}
  </button>
);
const Small = ({ icon: I, text, muted, caret }: { icon: Drawn; text: string; muted?: boolean; caret?: boolean }) => (
  <button className={`flex h-[22px] items-center whitespace-nowrap ${muted ? "text-[#838383]" : "text-[#262626]"}`}>
    <I size={16} className="mr-[3px]" />{text}{caret && <Caret className="ml-1" />}
  </button>
);
const Group = ({ label, width, children }: { label: string; width: string; children: React.ReactNode }) => (
  <div className={`flex h-[88px] shrink-0 flex-col border-r border-[#e2e3e4] ${width}`}>
    <div className="flex h-[71px]">{children}</div>
    <div className="text-center leading-4 text-[#5a5a5a]">{label}</div>
  </div>
);

type Row = [string, string, string];
const groups: { rows: Row[]; height: string }[] = [
  { height: "h-[34px]", rows: [["23/06/2024 14:12", "Documento do Mi...", "38 KB"], ["23/06/2024 14:09", "Documento do Mi...", "145 KB"], ["23/06/2024 14:26", "Planilha do Micro...", "858 KB"], ["23/06/2024 17:12", "Documento do Mi...", "999 KB"]] },
  { height: "h-8", rows: [["22/06/2024 17:04", "Pasta de arquivos", ""], ["22/06/2024 15:11", "Arquivo ZIP do Wi...", "5.922 KB"]] },
  { height: "h-8", rows: [["20/06/2024 12:17", "Pasta de arquivos", ""], ...([["31", 0], ["15", 0], ["41", 0], ["15", 1], ["11", 1], ["11", 1], ["41", 1], ["19", 1], ["45", 1]] as [string, number][]).map(([m, k]): Row => [`20/06/2024 11:${m}`, "Arquivo PNG", `${k} KB`])] },
];

const Explorer = () => (
  <section aria-label="Downloads" className="absolute top-[243px] left-[164px] flex h-[652px] w-[1125px] flex-col border border-[#a0a0a0] bg-white font-['Noto_Sans',sans-serif] text-[11px] shadow-[0_4px_18px_rgba(0,0,0,0.35)]">
    <div className="flex h-[30px] shrink-0 items-center pl-2 text-[#999]">
      <DownArrow size={16} /><span className="mx-[7px] h-3 w-px bg-[#8a8a8a]" />
      <CheckDoc size={17} className="ml-[2px]" /><PlainFolder size={17} className="ml-[5px]" />
      <svg width="8" height="8" viewBox="0 0 8 8" className="ml-[6px]"><path d="M0 .5h8" stroke="#000" /><path d="M0 3h8L4 7z" fill="#000" /></svg>
      <span className="mr-[7px] ml-[7px] h-3 w-px bg-[#8a8a8a]" /><span>Downloads</span>
      <div className="ml-auto flex">
        {["M0 6h11", "M1 1h10v10H1z", "M1 1l10 10M11 1 1 11"].map((d, i) => (
          <button key={d} aria-label={["Minimizar", "Maximizar", "Fechar"][i]} className="flex h-[29px] w-[46px] items-center justify-center"><svg width="12" height="12" viewBox="0 0 12 12"><path d={d} fill="none" stroke="#888" /></svg></button>
        ))}
      </div>
    </div>
    <div className="flex h-[24px] shrink-0 items-stretch text-[#262626]">
      <button className="w-14 bg-[#0063b1] text-white">Arquivo</button>
      <button className="-mb-px w-14 border border-b-0 border-[#dadbdc] bg-[#f5f6f7]">Início</button>
      <button className="w-[97px]">Compartilhar</button>
      <button className="w-[57px]">Exibir</button>
      <div className="ml-auto flex items-center gap-[7px] pr-[3px]">
        <button aria-label="Minimizar faixa" className="text-[#888]"><MdKeyboardArrowUp size={14} /></button>
        <button aria-label="Ajuda" className="flex h-4 w-4 items-center justify-center rounded-full bg-[#0063b1] font-bold text-white">?</button>
      </div>
    </div>
    <div className="flex h-[92px] shrink-0 border-y border-[#dadbdc] bg-[#f5f6f7] pt-[2px]">
      <Group label="Área de Transferência" width="w-[281px] pr-1">
        <Big icon={PinIcon} lines={["Fixar no", "Acesso rápido"]} width="ml-[5px] w-[78px]" muted />
        <Big icon={CopyDocs} lines={["Copiar"]} width="w-[43px]" />
        <Big icon={Clipboard} lines={["Colar"]} width="w-[42px]" muted />
        <div className="ml-[2px]"><Small icon={Scissors} text="Recortar" /><Small icon={PathIcon} text="Copiar caminho" /><Small icon={ShortcutIcon} text="Colar atalho" muted /></div>
      </Group>
      <Group label="Organizar" width="w-[202px]">
        <Big icon={MoveFolder} lines={["Mover", "para"]} width="ml-[3px] w-[42px]" caret />
        <Big icon={CopyFolder} lines={["Copiar", "para"]} width="w-[42px]" caret />
        <span className="mx-[3px] mt-1 h-14 w-px bg-[#dadbdc]" />
        <Big icon={DeleteX} lines={["Excluir"]} width="w-[46px]" caret />
        <Big icon={RenameIcon} lines={["Renomear"]} width="w-[56px]" />
      </Group>
      <Group label="Novo" width="w-[148px]">
        <Big icon={NewFolder} lines={["Nova", "pasta"]} width="ml-[3px] w-[42px]" />
        <div className="ml-[4px]"><Small icon={NewItemIcon} text="Novo item" caret /><Small icon={EasyIcon} text="Fácil acesso" caret /></div>
      </Group>
      <Group label="Abrir" width="w-[156px]">
        <Big icon={CheckDoc} lines={["Propriedades"]} width="ml-1 w-[72px]" caret />
        <div className="ml-[4px]"><Small icon={WordIcon} text="Abrir" caret /><Small icon={EditDocIcon} text="Editar" /><Small icon={HistoryIcon} text="Histórico" /></div>
      </Group>
      <Group label="Selecionar" width="w-[118px]">
        <div className="ml-[7px]"><Small icon={SelAll} text="Selecionar tudo" /><Small icon={SelNone} text="Limpar seleção" /><Small icon={SelInv} text="Inverter seleção" /></div>
      </Group>
    </div>
    <div className="flex h-[35px] shrink-0 items-start pt-[6px] pr-3 pl-[106px] text-[#6d6d6d]">
      <div className="flex h-[22px] flex-1 items-center border border-[#d9d9d9] pl-[2px]">
        <DownArrow size={16} />
        <button aria-label="Locais anteriores" className="ml-auto flex w-[18px] justify-center"><MdKeyboardArrowDown size={15} /></button>
        <button aria-label="Atualizar" className="flex h-5 w-[18px] items-center justify-center border-l border-[#d9d9d9]"><MdRefresh size={14} /></button>
      </div>
      <label className="ml-[11px] flex h-[22px] w-[202px] items-center border border-[#d9d9d9] px-2">
        <input aria-label="Pesquisar" placeholder="Pesquisar em Downloads" className="min-w-0 flex-1 outline-none placeholder:text-[#6d6d6d]" />
        <MdSearch size={15} className="-scale-x-100" />
      </label>
    </div>
    <div className="flex min-h-0 flex-1">
      <div className="min-w-0 flex-1 overflow-hidden pr-2 pl-[182px]">
        <table className="w-full table-fixed border-collapse text-left text-[#6d6d6d]">
          <colgroup><col className="w-[246px]" /><col className="w-[147px]" /><col className="w-[120px]" /><col className="w-[80px]" /><col /></colgroup>
          <thead>
            <tr className="h-[26px] text-[#4c607a]">
              {["Nome", "Data de modificação", "Tipo"].map((h) => <th key={h} className="border-r border-[#e5e5e5] px-[7px] font-normal whitespace-nowrap">{h}</th>)}
              <th className="relative border-r border-[#e5e5e5] px-[7px] font-normal"><MdKeyboardArrowUp size={12} className="absolute -top-1 left-[33px]" />Tamanho</th><th />
            </tr>
          </thead>
          {groups.map((g, gi) => (
            <tbody key={gi}>
              <tr className={g.height}><td colSpan={5}><div className={`h-px bg-[#e2e2e2] ${gi === 0 ? "mt-1" : ""}`} /></td></tr>
              {g.rows.map((r, i) => {
                const bg = gi === 0 && i === 3 ? "bg-[#d9d9d9]" : "";
                return (
                  <tr key={i} className="h-[21px]">
                    <td className={bg} /><td className={`px-[7px] ${bg}`}>{r[0]}</td><td className={`px-[7px] whitespace-nowrap ${bg}`}>{r[1]}</td><td className={`pr-[7px] text-right whitespace-nowrap ${bg}`}>{r[2]}</td><td />
                  </tr>
                );
              })}
            </tbody>
          ))}
        </table>
      </div>
      <div className="mr-px flex w-[15px] flex-col items-center bg-[#f0f0f0] pt-px text-[#505050]">
        <MdKeyboardArrowUp size={16} /><div className="h-9 w-full bg-[#cdcdcd]" /><MdKeyboardArrowDown size={16} className="mt-auto" />
      </div>
    </div>
    <div className="flex h-[23px] shrink-0 justify-end gap-[2px] pr-[5px]">
      <button aria-label="Detalhes" className="flex h-[22px] w-[22px] items-center justify-center border border-[#26a0da] bg-[#cbe8f6]">
        <svg width="16" height="14" viewBox="0 0 16 14" fill="none" stroke="#7b7b7b"><path d="M.5.5h4v4h-4zM.5 4.500h4v4h-4zM.5 8.500h4v4h-4zM6 2.500h4M11 2.500h5M6 6.500h4M11 6.500h5M6 10.500h4M11 10.500h5" /></svg>
      </button>
      <button aria-label="Miniaturas" className="flex h-[22px] w-[18px] items-center justify-center">
        <svg width="14" height="11" viewBox="0 0 14 11"><path d="M.5.5h13v10H.5z" fill="#fff" stroke="#808080" /><path d="M2 2h10v3H2z" fill="#5aa0e6" /><path d="M2 5h10v4H2z" fill="#2c6a58" /></svg>
      </button>
    </div>
  </section>
);

/* ---------- start menu ---------- */

type App = { letter: string } | { name: string; icon: Drawn; sub?: string; folder?: boolean; hot?: boolean };
const apps: App[] = [
  { letter: "A" },
  { name: "Access", icon: AccessIcon },
  { name: "Acessórios do Windows", icon: FolderIcon, folder: true },
  { name: "Android Studio", icon: FolderIcon, folder: true },
  { name: "AnyDesk", icon: FolderIcon, folder: true },
  { name: "apps do Chrome", icon: FolderIcon, folder: true },
  { name: "Avast Secure Browser", icon: AvastIcon },
  { letter: "B" },
  { name: "Backup do Windows", icon: BackupIcon, sub: "Sistema" },
  { name: "BitTorrent", icon: BitTorrentIcon },
  { letter: "C" },
  { name: "Calculadora", icon: CalcIcon },
  { name: "Calendário", icon: CalendarIcon },
  { name: "Câmera", icon: CameraIcon, hot: true },
  { name: "Captura e Esboço", icon: SnipIcon },
  { name: "Clima", icon: WeatherIcon },
  { name: "Configurações", icon: SettingsIcon, sub: "Sistema" },
  { name: "Cortana", icon: CortanaIcon },
];

const Line = ({ children }: { children: React.ReactNode }) => (
  <svg width="18" height="18" viewBox="0 0 18 18" fill="none" stroke="#111" strokeWidth="1.200" aria-hidden="true">{children}</svg>
);
const Rail = () => (
  <div className="flex w-[50px] flex-col items-center pt-[4px]">
    <button aria-label="Expandir" className="flex h-12 w-12 items-center justify-center"><svg width="16" height="10" viewBox="0 0 16 10" stroke="#000"><path d="M0 .5h16M0 5.500h16M0 9.500h16" /></svg></button>
    <div className="mt-auto flex flex-col">
      <button aria-label="Conta" className="relative flex h-[48px] w-12 items-center justify-center">
        <span className="flex h-5 w-5 items-center justify-center rounded-full bg-[#ebebeb]">
          <svg width="12" height="12" viewBox="0 0 12 12" fill="none" stroke="#333"><circle cx="6" cy="4" r="3" /><path d="M1.500 11.500c.5-6 8.500-6 9 0" /></svg>
        </span>
        <span className="absolute top-[14px] right-[13px] h-2 w-2 rounded-full bg-[#ff9800]" />
      </button>
      <button aria-label="Documentos" className="flex h-[49px] w-12 items-center justify-center"><Line><path d="M3 1.500h7.500L15 6v10.500H3zM10.500 1.500V6H15" /></Line></button>
      <button aria-label="Imagens" className="flex h-[48px] w-12 items-center justify-center"><Line><path d="M1 3.500h16v11.500H1zM1 12l5-5 7 7M11 12l2-2 4 4" /><circle cx="13" cy="6.500" r=".5" /></Line></button>
      <button aria-label="Configurações" className="flex h-[48px] w-12 items-center justify-center">
        <svg width="18" height="18" viewBox="0 0 24 24" fill="none" stroke="#222" strokeWidth="1.400"><path d={GearPath} transform="translate(0 -1)" /><circle cx="12" cy="12" r="3" /></svg>
      </button>
      <button aria-label="Energia" className="relative flex h-[48px] w-12 items-center justify-center">
        <Line><path d="M9 0v8M5.500 3a7 7 0 1 0 7 0" /></Line><span className="absolute right-[15px] bottom-[15px] h-[6px] w-[6px] rounded-full bg-[#ff9800]" />
      </button>
    </div>
  </div>
);

const Tile = ({ label, children, className = "bg-[#efefef]" }: { label?: string; children?: React.ReactNode; className?: string }) => (
  <button className={`flex h-[100px] w-[100px] flex-col px-2 pb-1 text-left ${className}`}>
    <span className="flex w-full flex-1 flex-col">{children}</span>
    {label && <span className="leading-4 whitespace-nowrap">{label}</span>}
  </button>
);
const Center = ({ icon: I, size = 32 }: { icon: Drawn; size?: number }) => (
  <span className="flex w-full flex-1 items-center justify-center pt-5"><I size={size} className="drop-shadow-[0_1px_2px_rgba(0,0,0,0.4)]" /></span>
);

const StartMenu = () => (
  <section aria-label="Iniciar" className="absolute bottom-10 left-0 flex h-[640px] w-[648px] bg-linear-to-br from-[#e0e2e3] via-[#e1e3e5] to-[#e4e5e5] font-['Noto_Sans',sans-serif] text-[11px] text-black shadow-[2px_0_8px_rgba(0,0,0,0.3)]">
    <Rail />
    <div className="ml-[10px] w-[246px] overflow-hidden pt-[7px]">
      {apps.map((a) => "letter" in a ? (
        <div key={a.letter} className="flex h-9 items-center pt-[6px] pl-[13px]"><button>{a.letter}</button></div>
      ) : (
        <button key={a.name} className={`flex h-9 w-full items-center pl-1 text-left ${a.hot ? "bg-[#f2f3f3]" : ""}`}>
          <a.icon size={24} />
          <span className="ml-2 pt-px leading-4">{a.name}{a.sub && <span className="block text-[#666]">{a.sub}</span>}</span>
          {a.folder && <ThinDown className="mr-[8px] ml-auto text-[#444]" />}
        </button>
      ))}
    </div>
    <div className="mt-3 ml-[9px] h-[99px] w-[2px] bg-[#6f7072]" />
    <div className="ml-[7px] pt-[21px]">
      <h3 className="leading-4">Produtividade</h3>
      <div className="mt-3 grid grid-cols-[100px_100px_100px] gap-1">
        <Tile label="Microsoft 365..."><Center icon={M365Icon} size={30} /></Tile>
        <Tile><span className="flex justify-between pt-2"><OneDriveIcon size={18} /><OneNoteIcon size={18} /><SkypeIcon size={18} /></span></Tile>
        <Tile>
          <span className="pt-[14px] text-center leading-4 whitespace-nowrap">Somos<br />compatíveis<br />com o Outlook</span>
          <span className="mt-auto flex items-end justify-between leading-4">Email<MailOpenIcon size={16} /></span>
        </Tile>
        <Tile label="Microsoft Edge"><Center icon={EdgeIcon} /></Tile>
        <Tile label="Fotos"><Center icon={PhotosIcon} size={28} /></Tile>
        <button aria-label="LinkedIn" className="h-[100px] w-[100px]">
          <svg width="100" height="100" viewBox="0 0 100 100"><rect width="100" height="100" rx="7" fill="#0a66c2" /><circle cx="22" cy="22" r="8.500" fill="#f0f0f0" /><path d="M14 38h15v48H14z" fill="#f0f0f0" /><path d="M38 38h14v6c3-5 8-8 15-8 13 0 19 8 19 22v28H71V61c0-7-2-12-9-12s-10 5-10 12v25H38z" fill="#f0f0f0" /></svg>
        </button>
      </div>
      <h3 className="mt-3 leading-4">Explorar</h3>
      <div className="mt-3 grid grid-cols-[100px_100px_100px] gap-1">
        <Tile label="Microsoft Store"><Center icon={StoreIcon} /></Tile>
        <Tile className="bg-[linear-gradient(125deg,#1ecb5c_0%,#1fc659_48%,#1fbc55_49%,#22c05a_100%)] text-white">
          <span className="pt-[7px] leading-4 whitespace-nowrap">Escute suas<br />músicas<br />favoritas de<br />graça.</span>
          <span className="mt-auto flex items-center justify-between pr-[2px] leading-4">Spotify<FaSpotify size={12} /></span>
        </Tile>
        <Tile>
          <span className="flex flex-1 items-center justify-center pt-5"><FaWhatsapp size={42} className="text-[#1d8a5b]" /></span>
          <span className="flex items-center justify-between leading-4">WhatsApp<span className="text-[13px]">27</span></span>
        </Tile>
        <Tile label="Filmes e TV"><Center icon={FilmsIcon} /></Tile>
        <Tile label="Solitaire &amp; Ca..."><Center icon={SolitaireIcon} /></Tile>
        <Tile label="Reproduzir"><span className="flex items-center justify-between pt-2 pl-[2px]"><ClipIcon size={14} /><TodoIcon size={16} /><CalcIcon size={18} /></span></Tile>
      </div>
    </div>
  </section>
);

/* ---------- taskbar ---------- */

const TaskButton = ({ label, open, children }: { label: string; open?: boolean; children: React.ReactNode }) => (
  <button aria-label={label} className={`relative mr-2 flex h-10 w-[41px] items-center justify-center border-b-[3px] pt-[3px] ${open ? "border-[#0078d7]" : "border-transparent"}`}>{children}</button>
);

const Taskbar = () => (
  <footer className="relative flex h-10 shrink-0 items-center bg-[#d5d5d5] font-['Open_Sans',sans-serif] text-[#111]">
    <button aria-label="Iniciar" className="flex h-10 w-12 items-center justify-center"><WindowsIcon size={16} /></button>
    <label className="flex h-10 w-[288px] items-center border-2 border-[#0078d7] bg-white pr-3 pl-[10px]">
      <svg width="16" height="16" viewBox="0 0 16 16" fill="none" stroke="#111" strokeWidth="1.200"><circle cx="10" cy="6" r="5.300" /><path d="M6 10 0 16" /></svg>
      <input aria-label="Pesquisar no Windows" placeholder="Pesquisar" className="ml-3 min-w-0 flex-1 text-sm outline-none placeholder:text-[#111]" />
      <Bowl />
    </label>
    <button aria-label="Visão de tarefas" className="flex h-10 w-[54px] items-center justify-center pr-[6px]">
      <svg width="18" height="16" viewBox="0 0 18 16" fill="none" stroke="#111" strokeWidth="1.200"><path d="M1 5h10v6H1zM1 0v2.500h10V0M1 16v-2.500h10V16M15 0v2M15 5v11" /><path d="M14 3h3v2h-3z" fill="#111" stroke="none" /></svg>
    </button>
    <TaskButton label="Edge"><EdgeIcon size={24} /></TaskButton>
    <TaskButton label="Explorador" open><ExplorerIcon size={24} /></TaskButton>
    <TaskButton label="Store"><StoreIcon size={24} /></TaskButton>
    <TaskButton label="Email"><MailIcon size={24} /></TaskButton>
    <TaskButton label="WhatsApp"><FaWhatsapp size={26} className="text-[#1d8a5b]" /><span className="absolute -right-[2px] bottom-0 flex h-[19px] w-[19px] items-center justify-center rounded-full border border-[#555] bg-[#d5d5d5] text-[11px]">27</span></TaskButton>
    <TaskButton label="BitTorrent" open><BitTorrentIcon size={24} /></TaskButton>
    <TaskButton label="Discord" open>
      <span className="flex h-6 w-6 items-center justify-center rounded-full bg-[#5865f2] text-white"><FaDiscord size={15} /></span>
      <span className="absolute right-[3px] bottom-[3px] flex h-4 w-4 items-center justify-center rounded-full bg-[#e5484d] text-[10px] text-white">9+</span>
    </TaskButton>
    <TaskButton label="Chrome" open><ChromeIcon size={24} /></TaskButton>
    <TaskButton label="Code" open><CodeIcon size={24} /></TaskButton>
    <TaskButton label="Prompt" open><CmdIcon size={24} /></TaskButton>
    <button className="ml-auto flex items-center text-[13px]"><CloudSunIcon size={24} /><span className="ml-[8px]">33°C</span><span className="ml-[9px]">Pred. nublado</span></button>
    <div className="ml-[22px] flex items-center gap-[6px]">
      <button aria-label="Ícones ocultos" className="flex w-[18px] justify-center"><svg width="12" height="7" viewBox="0 0 12 7" fill="none" stroke="#111" strokeWidth="1.300"><path d="M.5 6.500 6 1l5.500 5.500" /></svg></button>
      <button aria-label="Câmera em uso"><Line><rect x="3" y="5" width="8" height="8" rx="1.500" /><path d="M11 8l3-2v6l-3-2M4 2c2-1 5-1 7 0M4 16c2 1 5 1 7 0" /></Line></button>
      <button aria-label="Atualização" className="relative"><Line><path d="M1.500 3.500 16.500 2v14l-15-1zM6 8c1-2 4-2 5 0V5M12 9c-1 3-4 3-5.500 1v3" /></Line><span className="absolute right-0 bottom-0 h-[7px] w-[7px] rounded-full bg-[#ff9800]" /></button>
      <button aria-label="Rede"><Line><path d="M2.500 15C3 8 8 3 15 3M6 15c.5-5 4-8.500 9-8.500M9 15c.5-3 3-5 6-5.500" transform="translate(1 0)" /><circle cx="14" cy="14" r="1.500" fill="#111" /></Line></button>
      <button aria-label="Volume"><Line><path d="M1 7h2.500L7 3.500v11L3.500 11H1zM9.500 6.500c1.500 1.500 1.500 3.500 0 5M12 4.500c3 2.500 3 6.500 0 9M14.500 3c4 3.500 4 8.500 0 12" /></Line></button>
    </div>
    <button className="ml-[7px] w-[64px] text-center text-[11px] leading-[18px] whitespace-nowrap">17:15<br />23/06/2024</button>
    <button aria-label="Notificações" className="relative ml-[13px] flex h-10 w-[26px] items-center">
      <svg width="17" height="17" viewBox="0 0 17 17"><path d="M0 0h17v13H9l-4 4v-4H0z" fill="#000" /><path d="M3 3.500h11M3 6.500h11M3 9.500h7" stroke="#fff" /></svg>
      <span className="absolute right-[0px] bottom-[5px] flex h-4 w-4 items-center justify-center rounded-full border border-[#777] bg-[#cfcfcf] text-[10px]">3</span>
    </button>
    <button aria-label="Copilot" className="relative ml-[11px] flex h-10 w-6 items-center justify-center">
      <CopilotIcon size={22} className="-mt-[2px]" /><span className="absolute right-0 bottom-[10px] rounded-[2px] bg-[#ffc400] px-[2px] text-[6px] leading-[7px] font-bold">PRE</span>
    </button>
    <button aria-label="Mostrar área de trabalho" className="ml-4 h-10 w-[5px] border-l border-[#a5a5a5]" />
  </footer>
);

export default function App() {
  return (
    <main className="relative flex h-screen flex-col overflow-hidden">
      <Browser />
      <button aria-label="Mostrar painel lateral" className="absolute right-[-16px] bottom-12 flex h-10 w-10 items-center rounded-full bg-white pl-[5px] text-[#444746] shadow-[0_1px_3px_rgba(60,64,67,0.4)]"><MdChevronLeft size={18} /></button>
      <Explorer />
      <StartMenu />
      <Taskbar />
    </main>
  );
}
